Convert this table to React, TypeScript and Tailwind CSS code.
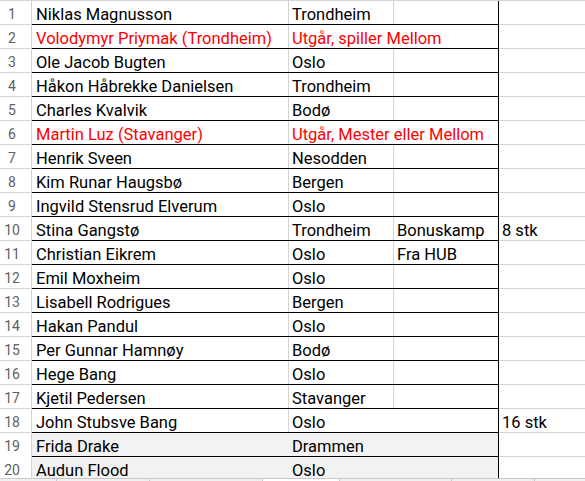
import React from 'react';

type RowData = {
  name: string;
  city: string;
  note?: string;
  count?: string;
  red?: boolean;
  spanBC?: boolean;
  thick?: boolean;
  fill?: boolean;
};

const ROWS: RowData[] = [
  { name: 'Niklas Magnusson', city: 'Trondheim' },
  { name: 'Volodymyr Priymak (Trondheim)', city: 'Utgår, spiller Mellom', red: true, spanBC: true },
  { name: 'Ole Jacob Bugten', city: 'Oslo' },
  { name: 'Håkon Håbrekke Danielsen', city: 'Trondheim' },
  { name: 'Charles Kvalvik', city: 'Bodø' },
  { name: 'Martin Luz (Stavanger)', city: 'Utgår, Mester eller Mellom', red: true, spanBC: true },
  { name: 'Henrik Sveen', city: 'Nesodden' },
  { name: 'Kim Runar Haugsbø', city: 'Bergen' },
  { name: 'Ingvild Stensrud Elverum', city: 'Oslo' },
  { name: 'Stina Gangstø', city: 'Trondheim', note: 'Bonuskamp', count: '8 stk', thick: true },
  { name: 'Christian Eikrem', city: 'Oslo', note: 'Fra HUB' },
  { name: 'Emil Moxheim', city: 'Oslo' },
  { name: 'Lisabell Rodrigues', city: 'Bergen' },
  { name: 'Hakan Pandul', city: 'Oslo' },
  { name: 'Per Gunnar Hamnøy', city: 'Bodø' },
  { name: 'Hege Bang', city: 'Oslo' },
  { name: 'Kjetil Pedersen', city: 'Stavanger' },
  { name: 'John Stubsve Bang', city: 'Oslo', count: '16 stk', thick: true, spanBC: true },
  { name: 'Frida Drake', city: 'Drammen', fill: true },
  { name: 'Audun Flood', city: 'Oslo', fill: true },
];

const txt = 'text-[16.5px] leading-[23px] pt-[2px] whitespace-nowrap';

const Row: React.FC<{ row: RowData; n: number; last: boolean }> = ({ row, n, last }) => {
  const h = last ? 'h-[21px]' : 'h-[24px]';
  const inner = row.fill && !last ? 'border-b border-[#f2f2f2]' : last ? '' : row.thick ? 'border-b border-black' : 'border-b border-[#d4d4d4]';
  const side = last ? '' : 'border-b border-[#d4d4d4]';
  const color = row.red ? 'text-[#ff0000]' : 'text-black';
  return (
    <div className={`flex ${h} shrink-0`}>
      <div className={`w-[32px] shrink-0 border-r border-[#d4d4d4] ${row.fill ? '' : side} text-center pr-[7px] text-[14px] leading-[23px] pt-[2px] text-[#5f5f5f]`}>
        {n}
      </div>
      <div className={`flex w-[467px] shrink-0 border-r border-black ${inner} ${row.fill ? 'bg-[#f2f2f2]' : ''} ${color}`}>
        <div className={`w-[257px] shrink-0 pl-[4px] ${row.fill ? 'border-r border-[#f2f2f2]' : 'border-r border-[#d4d4d4]'} ${txt}`}>
          {row.name}
        </div>
        {row.spanBC || row.fill ? (
          <div className={`flex-1 pl-[3px] ${txt}`}>{row.city}</div>
        ) : (
          <>
            <div className={`w-[105px] shrink-0 pl-[3px] border-r border-[#d4d4d4] ${txt}`}>{row.city}</div>
            <div className={`flex-1 pl-[3px] ${txt}`}>{row.note}</div>
          </>
        )}
      </div>
      <div className={`flex-1 pl-[3px] ${side} ${txt} text-black`}>{row.count}</div>
    </div>
  );
};

const App: React.FC = () => {
  return (
    <div
      className="w-[585px] h-[481px] overflow-hidden bg-white flex flex-col"
      style={{ fontFamily: 'Roboto, "Liberation Sans", sans-serif' }}
    >
      <div className="h-px shrink-0 bg-[#d4d4d4]" />
      {ROWS.map((row, i) => (
        <Row key={i} row={row} n={i + 1} last={i === ROWS.length - 1} />
      ))}
      <div className="flex h-[3px] shrink-0 border-t border-[#c8c8c8] bg-[#f0f0f0]">
        <div className="w-[57px] border-r border-[#c8c8c8]" />
        <div className="w-[93px] border-r border-[#c8c8c8]" />
        <div className="w-[112px]" />
        <div className="w-[78px] bg-white border-x border-[#c8c8c8]" />
        <div className="w-[112px] border-r border-[#c8c8c8]" />
        <div className="w-[83px] border-r border-[#c8c8c8]" />
        <div className="flex-1" />
      </div>
    </div>
  );
};

export default App;
